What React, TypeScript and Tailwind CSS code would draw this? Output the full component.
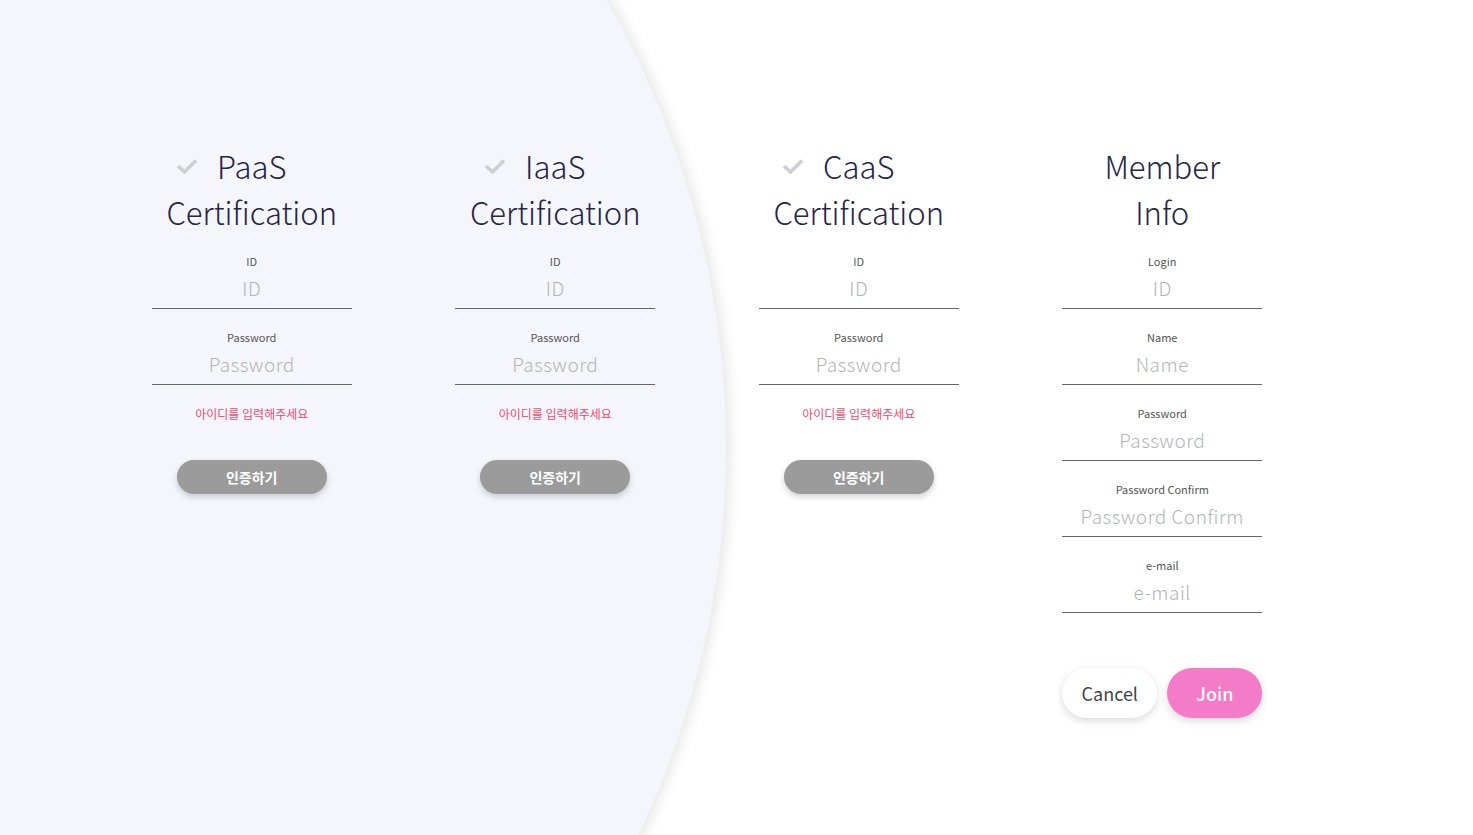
import React from "react";

const font = { fontFamily: '"Noto Sans CJK KR", "Noto Sans", sans-serif' };

function Check() {
  return (
    <svg width="22" height="16" viewBox="0 0 22 16" className="absolute right-full top-1/2 mr-[19px] mt-[-8px]">
      <path d="M2 8 L8.5 14 L20 2.5" fill="none" stroke="#cfcfd3" strokeWidth="3.6" strokeLinecap="butt" />
    </svg>
  );
}

function Field({ label, placeholder }: { label: string; placeholder: string }) {
  return (
    <div className="flex w-[200px] flex-col items-center border-b border-[#666] pt-[20px] pb-[6px]">
      <div className="h-[16px] text-[11px] leading-[16px] text-[#555]">{label}</div>
      <div className="mt-[5px] h-[28px] text-[19px] leading-[28px] tracking-[0.5px] text-[#b4b4b8] font-light">
        {placeholder}
      </div>
    </div>
  );
}

function Title({ children }: { children: React.ReactNode }) {
  return (
    <div className="flex flex-col items-center text-[31px] font-light leading-[46px] text-[#25254a]">{children}</div>
  );
}

function CertColumn({ name }: { name: string }) {
  return (
    <div className="flex flex-col items-center">
      <Title>
        <div className="relative">
          <Check />
          <span>{name}</span>
        </div>
        <div>Certification</div>
      </Title>
      <div className="mt-[-2px] flex flex-col">
        <Field label="ID" placeholder="ID" />
        <Field label="Password" placeholder="Password" />
      </div>
      <div className="mt-[21px] text-[12px] leading-[16px] text-[#ef4a6e]">아이디를 입력해주세요</div>
      <button className="mt-[38px] h-[34px] w-[150px] rounded-full bg-[#9b9b9b] text-[14px] font-bold text-white shadow-[0_3px_6px_rgba(0,0,0,0.18)]">
        인증하기
      </button>
    </div>
  );
}

function MemberColumn() {
  return (
    <div className="flex flex-col items-center">
      <Title>
        <div>Member</div>
        <div>Info</div>
      </Title>
      <div className="mt-[-2px] flex flex-col">
        <Field label="Login" placeholder="ID" />
        <Field label="Name" placeholder="Name" />
        <Field label="Password" placeholder="Password" />
        <Field label="Password Confirm" placeholder="Password Confirm" />
        <Field label="e-mail" placeholder="e-mail" />
      </div>
      <div className="mt-[55px] flex w-[200px] gap-[10px]">
        <button className="h-[50px] w-[95px] rounded-full bg-white text-[18px] text-[#444] shadow-[0_3px_8px_rgba(0,0,0,0.15)]">
          Cancel
        </button>
        <button className="h-[50px] w-[95px] rounded-full bg-[#f47bc8] text-[18px] font-medium text-white shadow-[0_3px_8px_rgba(0,0,0,0.15)]">
          Join
        </button>
      </div>
    </div>
  );
}

export default function App() {
  return (
    <div className="relative h-[835px] w-[1473px] overflow-hidden bg-white" style={font}>
      <div className="absolute left-[-1074px] top-[-452px] h-[1800px] w-[1800px] rounded-full bg-[#f5f6fb] shadow-[4px_0_14px_rgba(0,0,0,0.1)]" />
      <div className="relative grid grid-cols-[repeat(4,303.5px)] pl-[100px] pt-[143px]">
        <CertColumn name="PaaS" />
        <CertColumn name="IaaS" />
        <CertColumn name="CaaS" />
        <MemberColumn />
      </div>
    </div>
  );
}
